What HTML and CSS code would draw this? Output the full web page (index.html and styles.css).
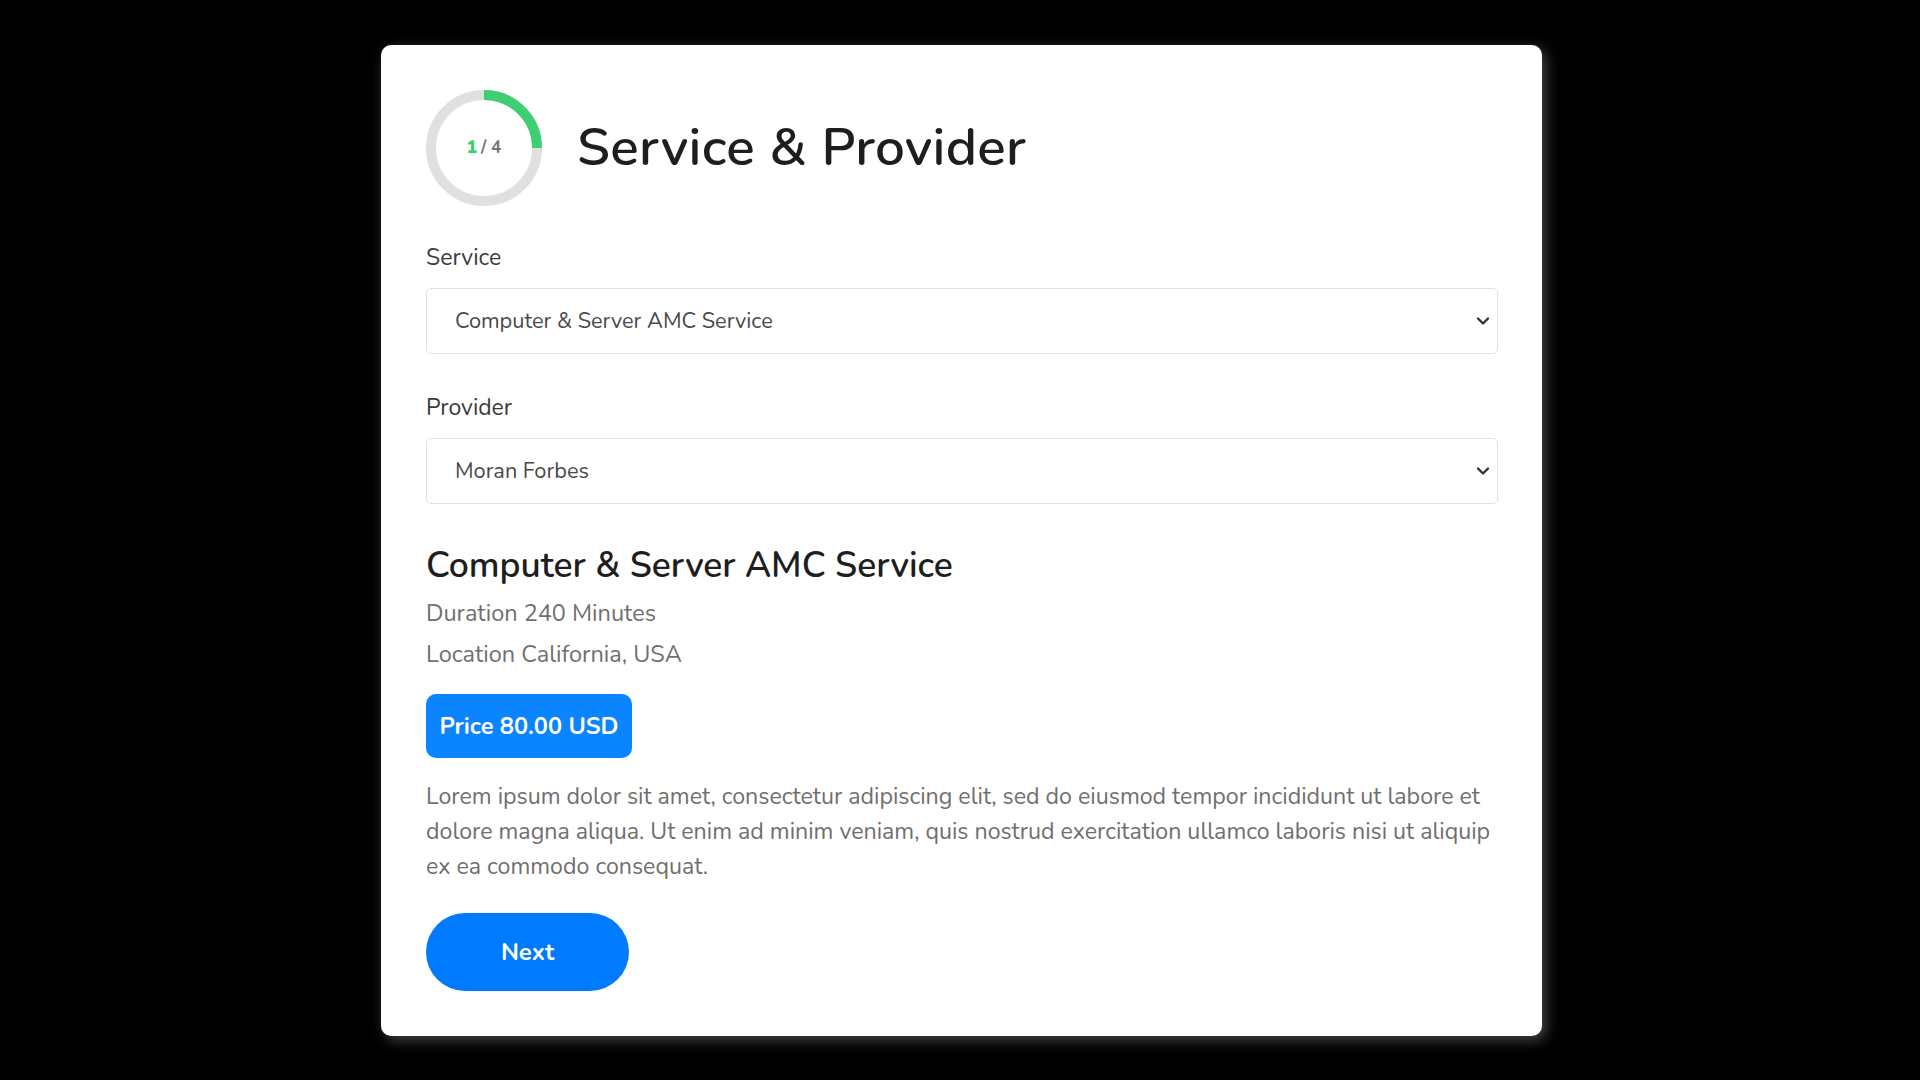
FILE: index.html
```html
<!DOCTYPE html>
<html lang="en">
<head>
<meta charset="utf-8">
<title>Service &amp; Provider</title>
<link rel="stylesheet" href="styles.css">
</head>
<body>
<main class="page">
  <section class="card">
    <header class="card-head">
      <div class="progress">
        <svg class="progress-ring" width="116" height="116" viewBox="0 0 116 116">
          <circle cx="58" cy="58" r="53" fill="none" stroke="#e0e0e0" stroke-width="10"/>
          <path d="M58 5 A53 53 0 0 1 111 58" fill="none" stroke="#3ecf75" stroke-width="10"/>
        </svg>
        <span class="progress-text"><b>1</b> / 4</span>
      </div>
      <h1 class="title">Service &amp; Provider</h1>
    </header>

    <div class="field">
      <label class="label">Service</label>
      <div class="select">
        <span>Computer &amp; Server AMC Service</span>
        <svg class="chev" width="14" height="10" viewBox="0 0 14 10"><path d="M2 2.5 L7 7.5 L12 2.5" fill="none" stroke="#333" stroke-width="2.4" stroke-linecap="round" stroke-linejoin="round"/></svg>
      </div>
    </div>

    <div class="field">
      <label class="label">Provider</label>
      <div class="select">
        <span>Moran Forbes</span>
        <svg class="chev" width="14" height="10" viewBox="0 0 14 10"><path d="M2 2.5 L7 7.5 L12 2.5" fill="none" stroke="#333" stroke-width="2.4" stroke-linecap="round" stroke-linejoin="round"/></svg>
      </div>
    </div>

    <h2 class="service-name">Computer &amp; Server AMC Service</h2>
    <p class="meta">Duration 240 Minutes</p>
    <p class="meta">Location California, USA</p>
    <div class="price">Price 80.00 USD</div>
    <p class="desc">Lorem ipsum dolor sit amet, consectetur adipiscing elit, sed do eiusmod tempor incididunt ut labore et dolore magna aliqua. Ut enim ad minim veniam, quis nostrud exercitation ullamco laboris nisi ut aliquip ex ea commodo consequat.</p>
    <button class="next">Next</button>
  </section>
</main>
</body>
</html>
```

FILE: styles.css
```css
* { box-sizing: border-box; }
html, body { margin: 0; padding: 0; }
body {
  background: #000;
  font-family: "Nunito", "Lato", "Noto Sans", sans-serif;
  width: 1920px;
  height: 1080px;
  overflow: hidden;
}
.page {
  display: flex;
  justify-content: flex-start;
  padding: 45px 0 0 381px;
}
.card {
  width: 1161px;
  height: 991px;
  background: #fff;
  border-radius: 10px;
  box-shadow: 4px 4px 14px rgba(255,255,255,0.28);
  padding: 44px 44px 44px 45px;
  display: flex;
  flex-direction: column;
  align-items: flex-start;
}
.card-head {
  display: flex;
  align-items: center;
  gap: 35px;
  height: 117px;
}
.progress {
  position: relative;
  width: 116px;
  height: 116px;
}
.progress-ring { display: block; }
.progress-text {
  position: absolute;
  inset: 0;
  display: flex;
  align-items: center;
  justify-content: center;
  font-size: 17px;
  font-weight: 700;
  color: #6c757d;
}
.progress-text b { color: #3ecf75; margin-right: 4px; }
.title {
  margin: 0;
  font-size: 53px;
  font-weight: 600;
  color: #1e1e1e;
  letter-spacing: 0.3px;
}
.field {
  width: 100%;
  display: flex;
  flex-direction: column;
  margin-top: 36px;
}
.field + .field { margin-top: 38px; }
.label {
  font-size: 23px;
  color: #3a3a3a;
  line-height: 32px;
  margin-bottom: 14px;
}
.select {
  width: 100%;
  height: 66px;
  border: 1.5px solid #e2e2e2;
  border-radius: 5px;
  display: flex;
  align-items: center;
  justify-content: space-between;
  padding: 0 7px 0 28px;
  font-size: 21.75px;
  color: #4a4a4a;
}
.chev { display: block; }
.service-name {
  margin: 40px 0 0;
  font-size: 35.5px;
  line-height: 44px;
  font-weight: 600;
  color: #1e1e1e;
}
.meta {
  margin: 8px 0 0;
  font-size: 23.5px;
  line-height: 34px;
  color: #707070;
}
.meta + .meta { margin-top: 7px; }
.price {
  margin-top: 23px;
  width: 206px;
  height: 64px;
  background: #0a84ff;
  border-radius: 10px;
  color: #fff;
  font-weight: 700;
  font-size: 23.5px;
  display: flex;
  align-items: center;
  justify-content: center;
}
.desc {
  margin: 21px 0 0;
  font-size: 23.2px;
  line-height: 35px;
  color: #6f6f6f;
}
.next {
  margin-top: 29px;
  width: 203px;
  height: 78px;
  border: none;
  border-radius: 40px;
  background: #007bff;
  color: #fff;
  font-family: inherit;
  font-size: 24px;
  font-weight: 700;
  cursor: pointer;
}
```
